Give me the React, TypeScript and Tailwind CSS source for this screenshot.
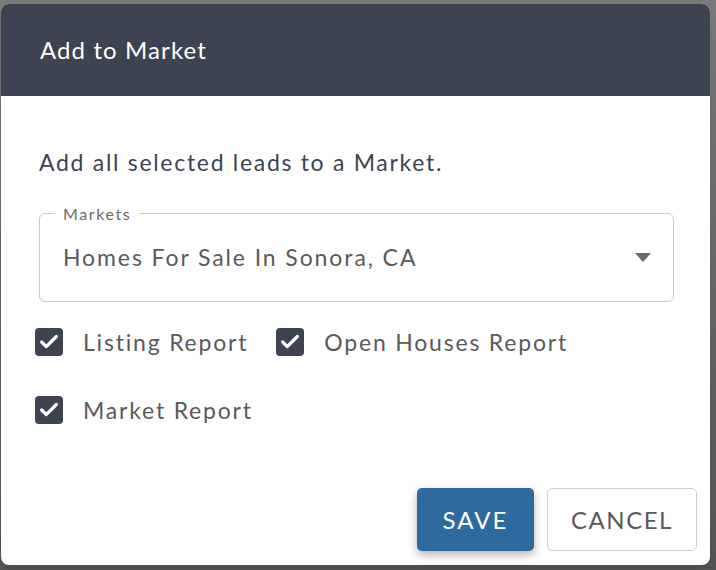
import { Check } from "lucide-react";

const font = { fontFamily: "Lato, 'Open Sans', sans-serif" };

function Box({ label }: { label: string }) {
  return (
    <label className="flex items-center gap-5">
      <span className="flex h-[28px] w-[28px] items-center justify-center rounded-[4px] bg-[#3d4351]">
        <Check className="h-[22px] w-[22px] text-white" strokeWidth={3.5} />
      </span>
      <span className="text-[23px] tracking-[1.8px] text-[#5a5a5a]">{label}</span>
    </label>
  );
}

export default function App() {
  return (
    <div
      className="h-[570px] w-[716px] overflow-hidden bg-gradient-to-b from-[#7a7a7a] to-[#555555] pl-[1px] pt-[4px]"
      style={font}
    >
      <div className="flex h-[561px] w-[709px] flex-col overflow-hidden rounded-[8px] bg-white shadow-lg">
        <div className="flex h-[92px] items-center bg-[#3d4351] px-[39px]">
          <h2 className="text-[24px] tracking-[1.1px] text-white">Add to Market</h2>
        </div>

        <div className="flex flex-1 flex-col px-[38px]">
          <p className="mt-[49px] text-[23px] tracking-[1.7px] text-[#3d4351]">
            Add all selected leads to a Market.
          </p>

          <div className="relative mt-[33px] flex h-[89px] w-[635px] items-center rounded-[6px] border border-[#c8c8c8] pl-[23px] pr-[22px]">
            <span className="absolute -top-[12px] left-[15px] bg-white px-[8px] text-[16px] tracking-[1.6px] text-[#6b6b6b]">
              Markets
            </span>
            <span className="flex-1 text-[23px] tracking-[1.9px] text-[#5a5a5a]">
              Homes For Sale In Sonora, CA
            </span>
            <svg width="16" height="9" viewBox="0 0 16 9">
              <path d="M0 0h16L8 9z" fill="#6b6b6b" />
            </svg>
          </div>

          <div className="mt-[23px] flex flex-col gap-[34px]">
            <div className="-ml-[4px] flex items-center gap-[28px]">
              <Box label="Listing Report" />
              <Box label="Open Houses Report" />
            </div>
            <div className="-ml-[4px]">
              <Box label="Market Report" />
            </div>
          </div>

          <div className="mt-auto mb-[14px] flex justify-end gap-[13px]">
            <button className="h-[63px] w-[117px] rounded-[5px] bg-[#2e6a9e] text-[24px] tracking-[2px] text-white shadow-[0_4px_10px_rgba(0,0,0,0.3)]">
              SAVE
            </button>
            <button className="-mr-[25px] h-[63px] w-[150px] rounded-[5px] border border-[#cfcfcf] text-[24px] tracking-[1.5px] text-[#5a5a5a]">
              CANCEL
            </button>
          </div>
        </div>
      </div>
    </div>
  );
}
